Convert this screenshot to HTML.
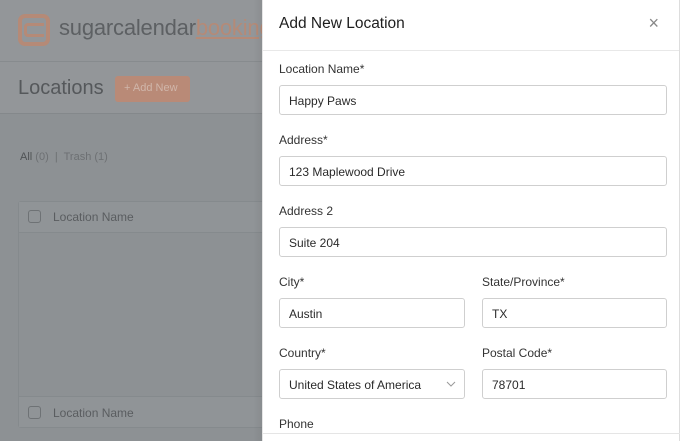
<!DOCTYPE html>
<html><head><style>
*{box-sizing:border-box;margin:0;padding:0}
body{width:680px;height:441px;overflow:hidden;position:relative;font-family:"Liberation Sans",sans-serif;background:#8d9194}
.l{position:absolute;left:0;top:0;width:263px;height:441px}
.hdr{position:absolute;left:0;top:0;width:263px;height:62px;background:#939699;border-bottom:1px solid #878b8e}
.band{position:absolute;left:0;top:62px;width:263px;height:52px;background:#939699;border-bottom:1px solid #84888b}
.p{position:absolute;left:262px;top:0;width:418px;height:441px;background:#fff;border-left:1px solid #e5e5e5;border-right:1px solid #ddd}
.ph{height:51px;border-bottom:1px solid #e8e8e8;padding:15px 16px;font-size:15.5px;color:#1e1e1e}
.x{position:absolute;right:20px;top:13px;font-size:18px;color:#888}
.lab{position:absolute;font-size:12px;color:#333}
.in{position:absolute;height:30px;border:1px solid #cfcfcf;border-radius:3px;font-size:12px;color:#2a2a2a;padding:8px 9px}
</style></head><body>
<div class="l">
<div class="hdr">
<div style="position:absolute;left:18px;top:14px;width:32px;height:32px;border:4px solid #b58a77;border-radius:7px"></div>
<div style="position:absolute;left:24px;top:23px;width:20px;height:14px;border:3px solid #b58a77;border-right:none;border-radius:4px 0 0 4px"></div>
<div style="position:absolute;left:59px;top:15px;font-size:22px;color:#5d6063;letter-spacing:-0.2px">sugarcalendar<span style="color:#b58a77;text-decoration:underline">booking</span></div>
</div>
<div class="band">
<div style="position:absolute;left:18px;top:15px;font-size:20px;color:#55585b">Locations</div>
<div style="position:absolute;left:115px;top:14px;width:75px;height:26px;background:#b98a77;border-radius:3px;color:#d0b6aa;font-size:11px;padding:6px 9px">+ Add New</div>
</div>
<div style="position:absolute;left:20px;top:151px;font-size:11px;color:#6d7073"><b style="font-weight:normal;color:#4f5255">All</b> (0) &nbsp;|&nbsp; Trash (1)</div>
<div style="position:absolute;left:18px;top:201px;width:260px;height:227px;border:1px solid #858a8d;border-radius:3px">
<div style="height:31px;border-bottom:1px solid #858a8d;background:#909497"></div>
<div style="position:absolute;left:0;bottom:0;width:100%;height:31px;border-top:1px solid #858a8d;background:#909497"></div>
</div>
<div style="position:absolute;left:28px;top:210px;width:13px;height:13px;border:1px solid #6e7275;border-radius:3px"></div>
<div style="position:absolute;left:53px;top:210px;font-size:12px;color:#5a5d60">Location Name</div>
<div style="position:absolute;left:28px;top:406px;width:13px;height:13px;border:1px solid #6e7275;border-radius:3px"></div>
<div style="position:absolute;left:53px;top:406px;font-size:12px;color:#5a5d60">Location Name</div>
<div style="position:absolute;left:253px;top:0;width:10px;height:441px;background:linear-gradient(90deg,rgba(0,0,0,0),rgba(0,0,0,0.06))"></div>
</div>
<div class="p">
<div class="ph">Add New Location</div><div class="x">×</div>
<div class="lab" style="left:16px;top:62px">Location Name*</div>
<div class="in" style="left:16px;top:85px;width:388px">Happy Paws</div>
<div class="lab" style="left:16px;top:133px">Address*</div>
<div class="in" style="left:16px;top:156px;width:388px">123 Maplewood Drive</div>
<div class="lab" style="left:16px;top:204px">Address 2</div>
<div class="in" style="left:16px;top:227px;width:388px">Suite 204</div>
<div class="lab" style="left:16px;top:275px">City*</div>
<div class="in" style="left:16px;top:298px;width:186px">Austin</div>
<div class="lab" style="left:219px;top:275px">State/Province*</div>
<div class="in" style="left:219px;top:298px;width:185px">TX</div>
<div class="lab" style="left:16px;top:346px">Country*</div>
<div class="in" style="left:16px;top:369px;width:186px">United States of America<svg style="position:absolute;right:8px;top:11px" width="10" height="6" viewBox="0 0 10 6"><path d="M1 1l4 4 4-4" fill="none" stroke="#999" stroke-width="1"/></svg></div>
<div class="lab" style="left:219px;top:346px">Postal Code*</div>
<div class="in" style="left:219px;top:369px;width:185px">78701</div>
<div class="lab" style="left:16px;top:417px">Phone</div>
<div style="position:absolute;left:0;top:433px;width:418px;height:1px;background:#e5e5e5"></div>
</div>
</body></html>
